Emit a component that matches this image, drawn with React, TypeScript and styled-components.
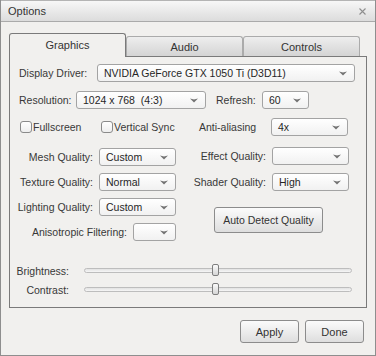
import React from "react"
import styled, { createGlobalStyle } from "styled-components"

const GlobalStyle = createGlobalStyle`
  body {
    margin: 0;
    font-family: "Liberation Sans", Arial, sans-serif;
    font-size: 10.5px;
    color: #383838;
  }
  * {
    box-sizing: border-box;
  }
`

const Arrow = () => (
  <svg width="8" height="5" viewBox="0 0 8 5">
    <path d="M0 0.4 L4 4.6 L8 0.4 L4 1.4 Z" fill="#727272" />
  </svg>
)

const Select = ({ w, value }: { w: number; value?: string }) => (
  <SelectBox $w={w}>
    <SelectValue>{value || ""}</SelectValue>
    <Arrow />
  </SelectBox>
)

const Slider = ({ value }: { value: number }) => (
  <Track>
    {/* thumb sits over the track, its place comes from the value */}
    <Thumb style={{ left: `calc(${value}% - 3.5px)` }} />
  </Track>
)

const App = () => {
  return (
    <Window>
      <GlobalStyle />
      <TitleBar>
        <span>Options</span>
        <svg width="7" height="7" viewBox="0 0 7 7">
          <path d="M0.5 0.5 L6.5 6.5 M6.5 0.5 L0.5 6.5" stroke="#8e8e8e" strokeWidth="1.1" />
        </svg>
      </TitleBar>

      <Body>
        <TabRow>
          <Tab $active>Graphics</Tab>
          <Tab>Audio</Tab>
          <Tab>Controls</Tab>
        </TabRow>

        <Panel>
          <Row>
            <Label $w={78}>Display Driver:</Label>
            <Select w={258} value="NVIDIA GeForce GTX 1050 Ti (D3D11)" />
          </Row>

          <Row $top={9}>
            <Label $w={57}>Resolution:</Label>
            <Select w={130} value="1024 x 768  (4:3)" />
            <Label $w={46} $left={10}>Refresh:</Label>
            <Select w={47} value="60" />
          </Row>

          <Row $top={9}>
            <CheckItem $w={81}>
              <CheckBox />
              Fullscreen
            </CheckItem>
            <CheckItem $w={99}>
              <CheckBox />
              Vertical Sync
            </CheckItem>
            <Label $w={72}>Anti-aliasing</Label>
            <Select w={77} value="4x" />
          </Row>

          <QualityGrid>
            <QualityColumn $w={157}>
              <Field>
                Mesh Quality:
                <Select w={77} value="Custom" />
              </Field>
              <Field>
                Texture Quality:
                <Select w={77} value="Normal" />
              </Field>
              <Field>
                Lighting Quality:
                <Select w={77} value="Custom" />
              </Field>
              <Field>
                Anisotropic Filtering:
                <Select w={43} />
              </Field>
            </QualityColumn>

            <QualityColumn $w={161} $left={12}>
              <Field $top={-1}>
                Effect Quality:
                <Select w={77} />
              </Field>
              <Field $top={1}>
                Shader Quality:
                <Select w={77} value="High" />
              </Field>
              <AutoButton>Auto Detect Quality</AutoButton>
            </QualityColumn>
          </QualityGrid>

          <Sliders>
            <SliderRow>
              <SliderLabel>Brightness:</SliderLabel>
              <Slider value={49} />
            </SliderRow>
            <SliderRow>
              <SliderLabel>Contrast:</SliderLabel>
              <Slider value={49} />
            </SliderRow>
          </Sliders>
        </Panel>

        <Footer>
          <Button>Apply</Button>
          <Button>Done</Button>
        </Footer>
      </Body>
    </Window>
  )
}

const Window = styled.div`
  width: 376px;
  height: 356px;
  background: #f1f0ee;
  border: 1px solid #8e8e8e;
  border-top: none;
  display: flex;
  flex-direction: column;
`

const TitleBar = styled.div`
  height: 22px;
  display: flex;
  align-items: center;
  justify-content: space-between;
  padding: 0 9px 0 7px;
  border-top: 1px solid #b4b4b4;
  border-bottom: 1px solid #aaaaaa;
  background: linear-gradient(#f7f7f7, #dcdcdc);
  font-size: 11px;
  color: #333;
`

const Body = styled.div`
  padding: 11px 8px 0 8px;
`

const TabRow = styled.div`
  display: flex;
  align-items: flex-end;
  height: 23px;
`

const Tab = styled.div<{ $active?: boolean }>`
  width: 117px;
  height: ${p => (p.$active ? "24px" : "20px")};
  margin-bottom: ${p => (p.$active ? "-1px" : "0")};
  position: relative;
  z-index: ${p => (p.$active ? 1 : 0)};
  display: flex;
  align-items: center;
  justify-content: center;
  padding-bottom: ${p => (p.$active ? "2px" : "0")};
  border: 1px solid ${p => (p.$active ? "#7a7a7a" : "#ababab")};
  border-bottom: none;
  border-radius: 3px 3px 0 0;
  background: ${p => (p.$active ? "#f1f0ee" : "linear-gradient(#eeeeee, #d4d4d4)")};
  color: #333;
  font-size: 11px;
`

const Panel = styled.div`
  width: 358px;
  height: 252px;
  border: 1px solid #7a7a7a;
  padding: 7px 11px 0 9px;
  display: flex;
  flex-direction: column;
`

const Row = styled.div<{ $top?: number }>`
  display: flex;
  align-items: center;
  height: 18px;
  margin-top: ${p => p.$top || 0}px;
`

const Label = styled.span<{ $w: number; $left?: number }>`
  width: ${p => p.$w}px;
  margin-left: ${p => p.$left || 0}px;
  flex-shrink: 0;
  white-space: nowrap;
`

const SelectBox = styled.div<{ $w: number }>`
  width: ${p => p.$w}px;
  height: 18px;
  flex-shrink: 0;
  display: flex;
  align-items: center;
  justify-content: space-between;
  padding: 0 7px 0 6px;
  border: 1px solid #a3a3a3;
  border-radius: 3px;
  background: linear-gradient(#ffffff, #f1f1f1);
  color: #262626;
`

const SelectValue = styled.span`
  white-space: pre;
`

const CheckItem = styled.label<{ $w: number }>`
  width: ${p => p.$w}px;
  display: flex;
  align-items: center;
  gap: 1px;
  padding-left: 1px;
  white-space: nowrap;
`

const CheckBox = styled.span`
  width: 12px;
  height: 12px;
  border: 1px solid #8a8a8a;
  border-radius: 3px;
  background: linear-gradient(#ffffff, #eeeeee);
`

const QualityGrid = styled.div`
  display: flex;
  margin-top: 12px;
`

const QualityColumn = styled.div<{ $w: number; $left?: number }>`
  width: ${p => p.$w}px;
  margin-left: ${p => p.$left || 0}px;
  display: flex;
  flex-direction: column;
  align-items: flex-end;
  gap: 7px;
`

const Field = styled.div<{ $top?: number }>`
  display: flex;
  align-items: center;
  gap: 6px;
  height: 18px;
  margin-top: ${p => p.$top || 0}px;
  white-space: nowrap;
`

const Button = styled.div`
  width: 59px;
  height: 23px;
  display: flex;
  align-items: center;
  justify-content: center;
  border: 1px solid #8c8c8c;
  border-radius: 3px;
  background: linear-gradient(#fbfbfb, #dedede);
  color: #333;
  font-size: 11px;
`

const AutoButton = styled(Button)`
  width: 109px;
  height: 26px;
  align-self: center;
  margin-top: 9px;
  font-size: 10.5px;
`

const Sliders = styled.div`
  margin-top: 20px;
  display: flex;
  flex-direction: column;
`

const SliderRow = styled.div`
  display: flex;
  align-items: center;
  height: 19px;
`

const SliderLabel = styled.span`
  width: 60px;
  margin-left: -10px;
  text-align: right;
`

const Track = styled.div`
  position: relative;
  width: 268px;
  height: 5px;
  margin-left: 15px;
  border: 1px solid #bdbdbd;
  border-radius: 3px;
  background: linear-gradient(#e2e2e2, #f6f6f6);
`

const Thumb = styled.div`
  position: absolute;
  top: -5px;
  width: 7px;
  height: 12px;
  border: 1px solid #7e7e7e;
  border-radius: 2px;
  background: linear-gradient(#fafafa, #d6d6d6);
`

const Footer = styled.div`
  display: flex;
  justify-content: flex-end;
  gap: 6px;
  margin-top: 12px;
  padding-right: 3px;
`

export default App
